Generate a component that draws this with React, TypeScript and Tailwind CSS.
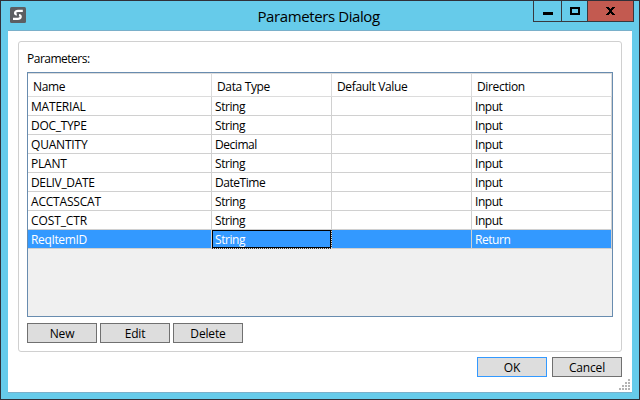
const rows: [string, string, string, string][] = [
  ['MATERIAL', 'String', '', 'Input'],
  ['DOC_TYPE', 'String', '', 'Input'],
  ['QUANTITY', 'Decimal', '', 'Input'],
  ['PLANT', 'String', '', 'Input'],
  ['DELIV_DATE', 'DateTime', '', 'Input'],
  ['ACCTASSCAT', 'String', '', 'Input'],
  ['COST_CTR', 'String', '', 'Input'],
  ['ReqItemID', 'String', '', 'Return'],
];

const nameTracking = [
  'tracking-[-0.2px]',
  'tracking-[-0.3px]',
  'tracking-[-0.2px]',
  'tracking-[-0.2px]',
  'tracking-[-0.35px]',
  'tracking-[-0.2px]',
  'tracking-[-0.1px]',
  'tracking-[-0.35px]',
];

function Button({ label, primary }: { label: string; primary?: boolean }) {
  return (
    <button
      className={`flex h-5 w-[70px] items-center justify-center border bg-[#dddddd] pt-px text-[12px] leading-[18px] tracking-[-0.15px] ${
        primary ? 'border-[#3399ff]' : 'border-[#707070]'
      }`}
    >
      {label}
    </button>
  );
}

function AppIcon() {
  return (
    <svg width="16" height="16" viewBox="0 0 16 16">
      <rect width="16" height="16" rx="1.5" fill="#5c5e62" />
      <path
        d="M12.8 3.9H8Q5.6 3.9 5.1 5.8Q4.8 7.4 6.8 7.6M3 11.9H7.8Q10.2 11.9 10.7 10Q11 8.4 9 8.2"
        fill="none"
        stroke="#fff"
        strokeWidth="2.2"
      />
    </svg>
  );
}

function TitleBar() {
  return (
    <header className="flex h-[29px] justify-between">
      <div className="w-[105px] pl-[9px] pt-[6px]">
        <AppIcon />
      </div>
      <h1 className="w-[300px] pl-[88px] pt-[4px] text-[15px] leading-[22px] tracking-[-0.4px] whitespace-nowrap">
        Parameters Dialog
      </h1>
      <div className="mr-[5px] flex h-[21px] border-x border-b border-[#38383e]">
        <div className="flex w-[28px] justify-center border-r border-[#38383e] pt-[11px]">
          <div className="h-[3px] w-[10px] bg-black" />
        </div>
        <div className="flex w-[26px] justify-center border-r border-[#38383e] pt-[6px]">
          <div className="h-2 w-[10px] border-2 border-black" />
        </div>
        <div className="flex w-[45px] justify-center bg-[#c35a50] pt-[6px]">
          <svg width="9" height="8" viewBox="0 0 9 8" shapeRendering="crispEdges">
            <path
              d="M0 0h3v1h-3zM6 0h3v1h-3zM1 1h3v1h-3zM5 1h3v1h-3zM2 2h5v1h-5zM3 3h3v2h-3zM2 5h5v1h-5zM1 6h3v1h-3zM5 6h3v1h-3zM0 7h3v1h-3zM6 7h3v1h-3z"
              fill="#000"
            />
          </svg>
        </div>
      </div>
    </header>
  );
}

const cols = 'grid grid-cols-[184px_120px_140px_140px]';

function ParameterTable() {
  return (
    <div className="h-[245px] w-[586px] border border-[#688caf] bg-[#f0f0f0]">
      <div className={`${cols} h-6 border-t border-b border-[#dcdcdc] bg-white text-[12px] leading-[25px]`}>
        {['Name', 'Data Type', 'Default Value', 'Direction'].map((h) => (
          <div key={h} className="h-[22px] border-r border-[#dcdcdc] pl-[5px] tracking-[-0.35px] whitespace-nowrap">
            {h}
          </div>
        ))}
      </div>
      {rows.map((row, r) => {
        const selected = r === rows.length - 1;
        return (
          <div
            key={row[0]}
            className={`${cols} h-[19px] border-b border-[#d0d0d0] text-[12px] leading-[20px] whitespace-nowrap ${
              selected ? 'bg-[#3399ff] text-white' : 'bg-white'
            }`}
          >
            {row.map((value, c) => {
              const focused = selected && c === 1;
              return (
                <div
                  key={c}
                  className={`relative h-[18px] border-r border-[#d0d0d0] pl-[3px] ${
                    c === 0 ? nameTracking[r] : 'tracking-[-0.45px]'
                  }`}
                >
                  {value}
                  {focused && (
                    <>
                      <div className="absolute inset-0 border border-black" />
                      <div className="absolute -right-px top-0 h-[18px] w-px bg-[repeating-linear-gradient(to_bottom,#333_0_1px,#ddd_1px_2px)]" />
                      <div className="absolute top-[18px] left-0 h-px w-[120px] bg-[repeating-linear-gradient(to_right,#333_0_1px,#ddd_1px_2px)]" />
                    </>
                  )}
                </div>
              );
            })}
          </div>
        );
      })}
    </div>
  );
}

function ResizeGrip() {
  return (
    <svg width="11" height="11" viewBox="0 0 11 11" shapeRendering="crispEdges">
      <path
        d="M9 0h2v2h-2zM6 3h2v2h-2zM9 3h2v2h-2zM3 6h2v2h-2zM6 6h2v2h-2zM9 6h2v2h-2zM0 9h2v2h-2zM3 9h2v2h-2zM6 9h2v2h-2zM9 9h2v2h-2z"
        fill="#b4b4b4"
      />
    </svg>
  );
}

export default function App() {
  return (
    <div className="h-[400px] w-[640px] border border-[#303038] bg-[#66cbea] font-['Open_Sans','Noto_Sans',sans-serif] text-black">
      <TitleBar />
      <main className="mx-[7px] h-[363px] border-y border-[#7ab0ca] bg-white">
        <section className="mt-[10px] ml-[10px] h-[311px] w-[604px] rounded-[3px] border border-[#d0d0d0] px-2">
          <div className="h-[30px] pt-[8px] text-[12px] leading-[18px] tracking-[-0.5px]">Parameters:</div>
          <ParameterTable />
          <div className="mt-[6px] flex gap-[3px]">
            <Button label="New" />
            <Button label="Edit" />
            <Button label="Delete" />
          </div>
        </section>
        <div className="mt-[5px] mr-[10px] flex justify-end gap-[5px]">
          <Button label="OK" primary />
          <Button label="Cancel" />
        </div>
        <div className="mt-[2px] mr-[2px] flex justify-end">
          <ResizeGrip />
        </div>
      </main>
    </div>
  );
}
